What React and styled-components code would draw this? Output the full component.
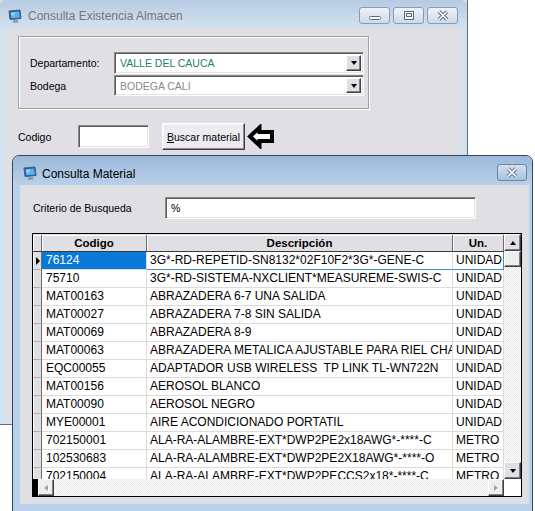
import React from "react";
import styled, { createGlobalStyle } from "styled-components";

const SANS = `"Liberation Sans", Arial, sans-serif`;

const GlobalStyle = createGlobalStyle`
  body {
    margin: 0;
    background: #fff;
    overflow: hidden;
    font-family: ${SANS};
  }
`;

const rows = [
  ["76124", "3G*-RD-REPETID-SN8132*02F10F2*3G*-GENE-C", "UNIDAD"],
  ["75710", "3G*-RD-SISTEMA-NXCLIENT*MEASUREME-SWIS-C", "UNIDAD"],
  ["MAT00163", "ABRAZADERA 6-7 UNA SALIDA", "UNIDAD"],
  ["MAT00027", "ABRAZADERA 7-8 SIN SALIDA", "UNIDAD"],
  ["MAT00069", "ABRAZADERA 8-9", "UNIDAD"],
  ["MAT00063", "ABRAZADERA METALICA AJUSTABLE PARA RIEL CHANNEL", "UNIDAD"],
  ["EQC00055", "ADAPTADOR USB WIRELESS  TP LINK TL-WN722N", "UNIDAD"],
  ["MAT00156", "AEROSOL BLANCO", "UNIDAD"],
  ["MAT00090", "AEROSOL NEGRO", "UNIDAD"],
  ["MYE00001", "AIRE ACONDICIONADO PORTATIL", "UNIDAD"],
  ["702150001", "ALA-RA-ALAMBRE-EXT*DWP2PE2x18AWG*-****-C", "METRO"],
  ["102530683", "ALA-RA-ALAMBRE-EXT*DWP2PE2X18AWG*-****-O", "METRO"],
  ["702150004", "ALA-RA-ALAMBRE-EXT*DWP2PECCS2x18*-****-C", "METRO"],
];

const Desktop = styled.div`
  position: relative;
  width: 535px;
  height: 511px;
  overflow: hidden;
  background: #fff;
`;

/* windows sit on the desktop at their own place */
const Window = styled.div`
  position: absolute;
  left: ${(p) => p.$x}px;
  top: ${(p) => p.$y}px;
  width: ${(p) => p.$w}px;
  height: ${(p) => p.$h}px;
  box-sizing: border-box;
  display: flex;
  flex-direction: column;
  border: 1px solid ${(p) => p.$line};
  border-radius: ${(p) => p.$radius || 0}px ${(p) => p.$radius || 0}px 0 0;
  background: ${(p) => p.$frame};
`;

const TitleBar = styled.div`
  height: ${(p) => p.$h}px;
  box-sizing: border-box;
  flex: none;
  display: flex;
  align-items: center;
  gap: ${(p) => p.$gap}px;
  padding: ${(p) => p.$top}px 0 0 ${(p) => p.$pad}px;
  background: ${(p) => p.$bg};
  border-radius: 6px 6px 0 0;
`;

const TitleText = styled.span`
  font-family: ${SANS};
  font-size: 12px;
  color: ${(p) => p.$color};
`;

const TitleButtons = styled.div`
  display: flex;
  gap: 3px;
  align-self: flex-start;
  margin: ${(p) => p.$top}px ${(p) => p.$right}px 0 auto;
`;

const TitleBtn = styled.div`
  width: ${(p) => p.$w}px;
  height: 17px;
  box-sizing: border-box;
  border: 1px solid ${(p) => p.$line};
  border-radius: 3px;
  background: ${(p) => p.$bg};
  display: flex;
  align-items: center;
  justify-content: center;
`;

const Client = styled.div`
  flex: none;
  height: ${(p) => p.$h}px;
  margin: 0 ${(p) => p.$right}px 0 ${(p) => p.$left}px;
  background: #e0dfe3;
  box-sizing: border-box;
  padding: ${(p) => p.$padTop}px 0 0 ${(p) => p.$padLeft}px;
  display: flex;
  flex-direction: column;
  font-family: ${SANS};
  font-size: 10.5px;
  color: #000;
`;

const GroupFrame = styled.div`
  width: 351px;
  height: 73px;
  box-sizing: border-box;
  border: 1px solid #a0a0a0;
  box-shadow: inset 1px 1px 0 #fff, 1px 1px 0 #fff;
  padding: 15px 0 0 11px;
  display: flex;
  flex-direction: column;
  gap: 1px;
`;

const FieldRow = styled.div`
  display: flex;
  align-items: center;
  height: ${(p) => p.$h}px;
`;

const Label = styled.span`
  width: ${(p) => p.$w}px;
  flex: none;
`;

const Sunken = styled.div`
  width: ${(p) => p.$w}px;
  height: ${(p) => p.$h}px;
  flex: none;
  box-sizing: border-box;
  background: #fff;
  border: 1px solid;
  border-color: #8a8a8a #fff #fff #8a8a8a;
  box-shadow: inset 1px 1px 0 #5a5a5a, inset -1px -1px 0 #e3e3e3;
  display: flex;
  align-items: center;
  padding: 2px;
`;

const FieldText = styled.span`
  flex: 1;
  padding-left: ${(p) => p.$pad}px;
  color: ${(p) => p.$color || "#000"};
  white-space: nowrap;
  overflow: hidden;
`;

const Raised = styled.div`
  box-sizing: border-box;
  background: #e0dfe3;
  border: 1px solid;
  border-color: #fff #404040 #404040 #fff;
  box-shadow: inset -1px -1px 0 #808080;
  display: flex;
  align-items: center;
  justify-content: center;
  flex: none;
`;

const DropBtn = styled(Raised)`
  width: 15px;
  align-self: stretch;
`;

const Tri = styled.span`
  width: 0;
  height: 0;
  border-style: solid;
  border-color: transparent;
  ${(p) =>
    p.$dir === "down" &&
    `border-width: 4px 3.5px 0 3.5px; border-top-color: ${p.$c};`}
  ${(p) =>
    p.$dir === "up" &&
    `border-width: 0 3.5px 4px 3.5px; border-bottom-color: ${p.$c};`}
  ${(p) =>
    p.$dir === "left" &&
    `border-width: 3.5px 4px 3.5px 0; border-right-color: ${p.$c}; filter: drop-shadow(1px 1px 0 #fff);`}
  ${(p) =>
    p.$dir === "right" &&
    `border-width: 3.5px 0 3.5px 4px; border-left-color: ${p.$c}; filter: drop-shadow(1px 1px 0 #fff);`}
`;

const SearchRow = styled.div`
  display: flex;
  align-items: center;
  height: 27px;
  margin-top: 14px;
`;

const PushButton = styled.button`
  width: 83px;
  height: 27px;
  margin-left: 13px;
  padding: 0;
  box-sizing: border-box;
  font-family: ${SANS};
  font-size: 10.5px;
  color: #000;
  background: #ecebef;
  border: 1px solid;
  border-color: #fff #404040 #404040 #fff;
  box-shadow: inset -1px -1px 0 #8a8a8a, inset 1px 1px 0 #f6f6f6;
`;

const CriterioRow = styled.div`
  display: flex;
  align-items: center;
  height: 22px;
  padding-left: 1px;
`;

const GridBox = styled.div`
  width: 490px;
  height: 264px;
  margin-top: 14px;
  box-sizing: border-box;
  border: 1px solid #000;
  background: #fff;
  display: grid;
  grid-template-columns: 471px 17px;
  grid-template-rows: 245px 17px;
`;

const Table = styled.div`
  overflow: hidden;
  display: flex;
  flex-direction: column;
  padding-top: 1px;
  background: #e0dfe3;
`;

const GridRow = styled.div`
  flex: none;
  height: ${(p) => p.$h || 18}px;
  display: grid;
  grid-template-columns: 9px 105px 306px 51px;
  background: #fff;
`;

const HeadCell = styled.div`
  box-sizing: border-box;
  background: #e0dfe3;
  border-right: 1px solid #6a6a6a;
  border-bottom: 1px solid #3a3a3a;
  box-shadow: inset 1px 1px 0 #fff;
  font-weight: bold;
  font-size: 11.5px;
  line-height: 16px;
  text-align: center;
  color: #000;
`;

const Indicator = styled.div`
  box-sizing: border-box;
  background: #e0dfe3;
  border-right: 1px solid #6a6a6a;
  border-bottom: 1px solid #b0b0b0;
  box-shadow: inset 1px 0 0 #fff;
  display: flex;
  align-items: center;
  justify-content: flex-end;
  padding-right: 1px;
`;

const Pointer = styled.span`
  width: 0;
  height: 0;
  border-style: solid;
  border-color: transparent transparent transparent #000;
  border-width: 4px 0 4px 4px;
`;

const Cell = styled.div`
  box-sizing: border-box;
  border-right: 1px solid ${(p) => (p.$focusRight ? "#3c8ad8" : "#dcdcdc")};
  border-bottom: 1px solid ${(p) => (p.$focus ? "#3c8ad8" : "#dcdcdc")};
  padding-left: ${(p) => p.$pad}px;
  font-size: 12px;
  line-height: 17px;
  white-space: pre;
  overflow: hidden;
  background: ${(p) => (p.$selected ? "#0a78d7" : "#fff")};
  color: ${(p) => (p.$selected ? "#fff" : "#000")};
`;

const VScroll = styled.div`
  display: flex;
  flex-direction: column;
`;

const Track = styled.div`
  flex: 1;
  background: repeating-conic-gradient(#e6e6e6 0 25%, #fff 0 50%) 0 0 / 2px 2px;
`;

const ScrollBtn = styled(Raised)`
  width: ${(p) => p.$w}px;
  height: ${(p) => p.$h}px;
  background: ${(p) => (p.$light ? "#eeeeee" : "#e0dfe3")};
`;

const HScroll = styled.div`
  display: flex;
`;

const BlackCap = styled.div`
  width: 5px;
  background: #000;
`;

const Corner = styled.div`
  background: #fff;
`;

const MonitorIcon = () => (
  <svg width="15" height="15" viewBox="0 0 15 15">
    <path d="M1 2 L12 1 L13 9.5 L2 10.5 Z" fill="#1d5fae" stroke="#4f5d6c" />
    <path d="M2.6 3.2 L11 2.4 L11.8 8.6 L3.3 9.3 Z" fill="#58b4ea" />
    <path d="M3 4 L8 3.4 L4 7.5 Z" fill="#9bd6f6" />
    <path d="M5.5 11 L9.5 10.6 L10.5 13.5 L4.5 14 Z" fill="#8d98a4" />
  </svg>
);

const Glyph = ({ kind, stroke, fill }) => (
  <svg width="16" height="11" viewBox="0 0 16 11">
    {kind === "min" && (
      <rect x="2.5" y="6.5" width="11" height="3" rx="1" fill={fill} stroke={stroke} />
    )}
    {kind === "max" && (
      <>
        <rect x="3.5" y="1.5" width="9" height="8" fill={fill} stroke={stroke} />
        <rect x="5.5" y="3.5" width="5" height="3" fill="#e8eef5" stroke={stroke} />
      </>
    )}
    {kind === "close" && (
      <>
        <path d="M4 1.5 L12 9.5 M12 1.5 L4 9.5" stroke={stroke} strokeWidth="3.6" />
        <path d="M4 1.5 L12 9.5 M12 1.5 L4 9.5" stroke={fill} strokeWidth="1.6" />
      </>
    )}
  </svg>
);

const BackArrow = () => (
  <svg width="28" height="25" viewBox="0 0 28 25" style={{ marginLeft: 2 }}>
    <path
      d="M3 12.5 L12.5 3.5 L12.5 8 L25 8 L25 17 L12.5 17 L12.5 21.5 Z"
      fill="#fff"
      stroke="#000"
      strokeWidth="4"
      strokeLinejoin="miter"
    />
  </svg>
);

export default function App() {
  return (
    <Desktop>
      <GlobalStyle />

      <Window $x={-1} $y={-1} $w={469} $h={426} $line="#6b6b6b" $frame="#d4e2f0">
        <TitleBar $h={28} $top={4} $pad={8} $gap={5} $bg="linear-gradient(#b6cbe2, #d3e2f1)">
          <MonitorIcon />
          <TitleText $color="#767676">Consulta Existencia Almacen</TitleText>
          <TitleButtons $top={3} $right={9}>
            {["min", "max", "close"].map((k) => (
              <TitleBtn key={k} $w={31} $line="#8c9bb1" $bg="linear-gradient(#eef3f8, #cfdae7)">
                <Glyph kind={k} stroke="#5b6b80" fill="#fff" />
              </TitleBtn>
            ))}
          </TitleButtons>
        </TitleBar>
        <Client $h={390} $left={6} $right={6} $padTop={8} $padLeft={12}>
          <GroupFrame>
            <FieldRow $h={22}>
              <Label $w={84}>Departamento:</Label>
              <Sunken $w={250} $h={22}>
                <FieldText $pad={3} $color="#2b7a74">VALLE DEL CAUCA</FieldText>
                <DropBtn>
                  <Tri $dir="down" $c="#000" />
                </DropBtn>
              </Sunken>
            </FieldRow>
            <FieldRow $h={21}>
              <Label $w={84}>Bodega</Label>
              <Sunken $w={250} $h={21}>
                <FieldText $pad={3} $color="#8a8a8a">BODEGA CALI</FieldText>
                <DropBtn>
                  <Tri $dir="down" $c="#000" />
                </DropBtn>
              </Sunken>
            </FieldRow>
          </GroupFrame>
          <SearchRow>
            <Label $w={60}>Codigo</Label>
            <Sunken $w={71} $h={23} />
            <PushButton>
              <u>B</u>uscar material
            </PushButton>
            <BackArrow />
          </SearchRow>
        </Client>
      </Window>

      <Window $x={12} $y={155} $w={521} $h={362} $line="#36455a" $radius={7} $frame="#b8d0eb">
        <TitleBar $h={29} $top={6} $pad={10} $gap={4} $bg="linear-gradient(#9cb8da, #b9d0ea)">
          <MonitorIcon />
          <TitleText $color="#000">Consulta Material</TitleText>
          <TitleButtons $top={2} $right={5}>
            <TitleBtn $w={30} $line="#6f84a3" $bg="linear-gradient(#d3e0ef, #a9c0dc)">
              <Glyph kind="close" stroke="#6a7d96" fill="#fff" />
            </TitleBtn>
          </TitleButtons>
        </TitleBar>
        <Client $h={319} $left={7} $right={3} $padTop={12} $padLeft={12}>
          <CriterioRow>
            <Label $w={132}>Criterio de Busqueda</Label>
            <Sunken $w={311} $h={22}>
              <FieldText $pad={3}>%</FieldText>
            </Sunken>
          </CriterioRow>

          <GridBox>
            <Table>
              <GridRow $h={17}>
                <HeadCell />
                <HeadCell>Codigo</HeadCell>
                <HeadCell>Descripción</HeadCell>
                <HeadCell>Un.</HeadCell>
              </GridRow>
              {rows.map(([code, desc, unit], i) => (
                <GridRow key={code}>
                  <Indicator>{i === 0 && <Pointer />}</Indicator>
                  <Cell $pad={4} $selected={i === 0}>
                    {code}
                  </Cell>
                  <Cell $pad={3} $focus={i === 0}>
                    {desc}
                  </Cell>
                  <Cell $pad={3} $focus={i === 0} $focusRight={i === 0}>
                    {unit}
                  </Cell>
                </GridRow>
              ))}
            </Table>
            <VScroll>
              <ScrollBtn $w={17} $h={17}>
                <Tri $dir="up" $c="#000" />
              </ScrollBtn>
              <ScrollBtn $w={17} $h={16} $light />
              <Track />
              <ScrollBtn $w={17} $h={17}>
                <Tri $dir="down" $c="#000" />
              </ScrollBtn>
            </VScroll>
            <HScroll>
              <BlackCap />
              <ScrollBtn $w={16} $h={17} $light>
                <Tri $dir="left" $c="#a0a0a0" />
              </ScrollBtn>
              <Track />
              <ScrollBtn $w={16} $h={17} $light>
                <Tri $dir="right" $c="#a0a0a0" />
              </ScrollBtn>
            </HScroll>
            <Corner />
          </GridBox>
        </Client>
      </Window>
    </Desktop>
  );
}
